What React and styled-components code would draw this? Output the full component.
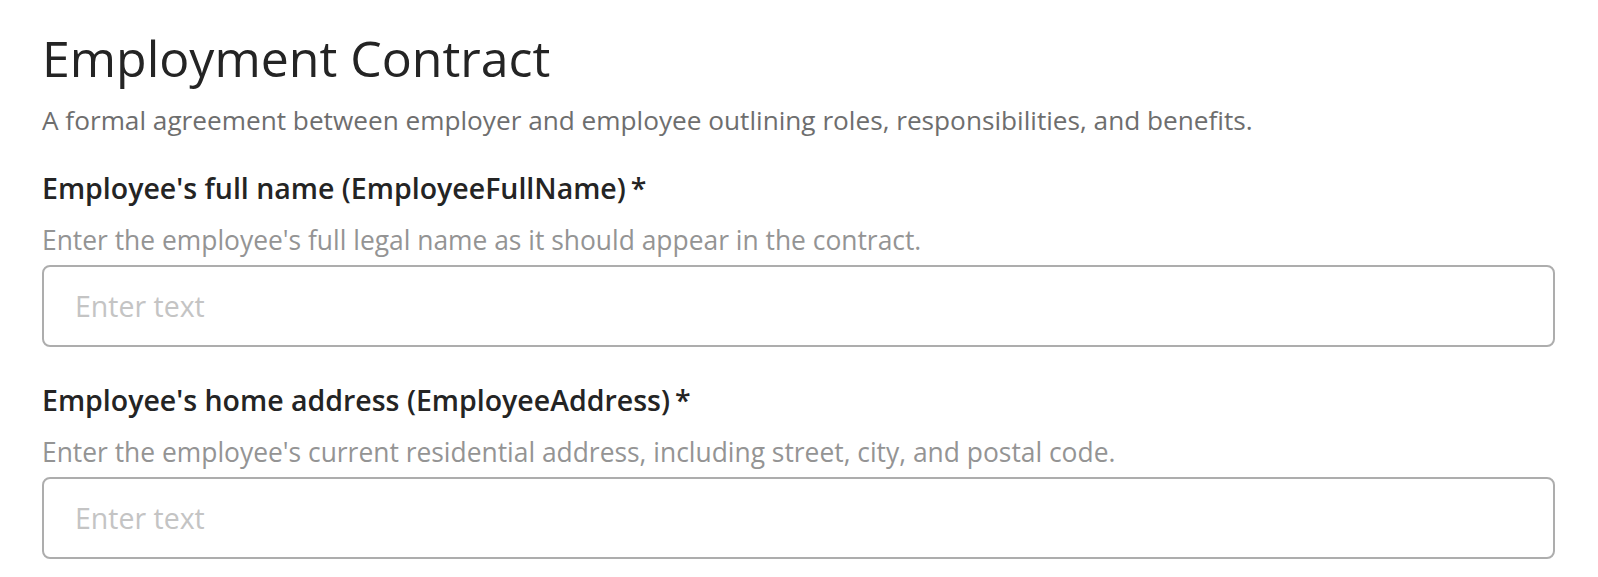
import React from 'react';
import styled, { createGlobalStyle } from 'styled-components';

const GlobalStyle = createGlobalStyle`
    body {
        margin: 0;
        background: #ffffff;
        font-family: 'Open Sans', 'Noto Sans', sans-serif;
    }
`;

const Page = styled.div`
    padding: 28px 43px 0 42px;
`;

const Title = styled.h1`
    margin: 0;
    font-size: 50px;
    line-height: 61px;
    font-weight: 400;
    color: #242424;
`;

const Subtitle = styled.p`
    margin: 13px 0 0 0;
    font-size: 26.2px;
    line-height: 36px;
    color: #6e6e6e;
`;

const Field = styled.div`
    display: flex;
    flex-direction: column;
    margin-top: ${props => props.gap}px;
`;

const Label = styled.label`
    font-size: 28.5px;
    line-height: 36px;
    font-weight: 600;
    color: #242424;

    .required {
        margin-left: 5px;
    }
`;

const Hint = styled.div`
    margin-top: 16px;
    font-size: 26.4px;
    line-height: 36px;
    color: #949494;
`;

const Input = styled.input`
    box-sizing: border-box;
    margin-top: 7px;
    width: 100%;
    height: 82px;
    padding: 0 31px;
    border: 2px solid #adadad;
    border-radius: 8px;
    font-family: inherit;
    font-size: 28.5px;
    color: #242424;
    background: #ffffff;
    outline: none;

    &::placeholder {
        color: #c4c4c4;
        opacity: 1;
    }
`;

const fields = [
    {
        label: "Employee's full name (EmployeeFullName)",
        hint: "Enter the employee's full legal name as it should appear in the contract.",
        gap: 32,
    },
    {
        label: "Employee's home address (EmployeeAddress)",
        hint: "Enter the employee's current residential address, including street, city, and postal code.",
        gap: 35,
    },
];

const App = () => (
    <Page>
        <GlobalStyle />
        <Title>Employment Contract</Title>
        <Subtitle>A formal agreement between employer and employee outlining roles, responsibilities, and benefits.</Subtitle>
        {fields.map((field, index) => (
            <Field key={index} gap={field.gap}>
                <Label>
                    {field.label}
                    <span className={'required'}>*</span>
                </Label>
                <Hint>{field.hint}</Hint>
                <Input type="text" placeholder="Enter text" />
            </Field>
        ))}
    </Page>
);

export default App;
